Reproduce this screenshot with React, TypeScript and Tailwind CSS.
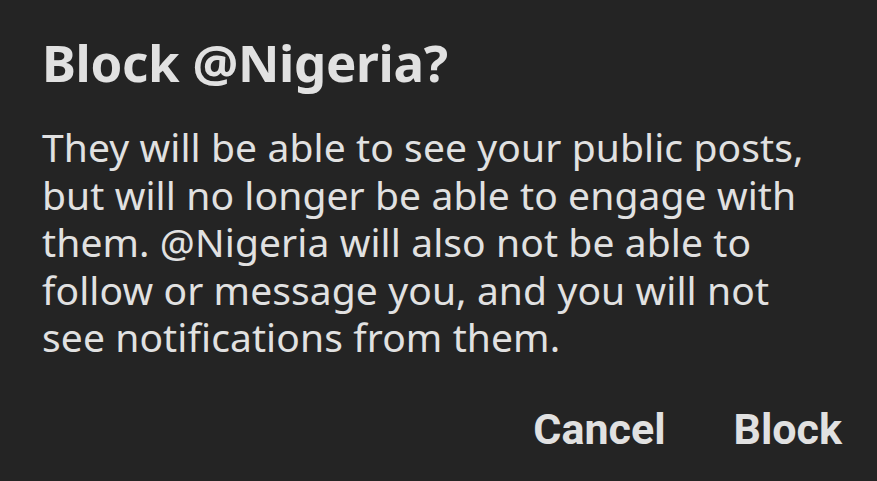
export default function App() {
  const lines = [
    'They will be able to see your public posts,',
    'but will no longer be able to engage with',
    'them. @Nigeria will also not be able to',
    'follow or message you, and you will not',
    'see notifications from them.',
  ]

  return (
    <div className="w-[877px] h-[481px] bg-[#242424] text-[#e1e1e1] overflow-hidden">
      <div className="pl-[42px] pr-[35px] pt-[28px]">
        <h1 className="font-['Noto_Sans',sans-serif] font-bold text-[51px] leading-[68px] tracking-[-0.3px]">
          Block @Nigeria?
        </h1>
        <p className="mt-[27px] font-['Noto_Sans',sans-serif] text-[39px] leading-[47.5px] tracking-[0.1px]">
          {lines.map((l) => (
            <span key={l} className="block whitespace-nowrap">
              {l}
            </span>
          ))}
        </p>
        <div className="mt-[43px] flex justify-end gap-[68px]">
          <button className="font-['Roboto',sans-serif] font-bold text-[43px] leading-[50px] text-[#e1e1e1]">
            Cancel
          </button>
          <button className="font-['Roboto',sans-serif] font-bold text-[43px] leading-[50px] text-[#e1e1e1]">
            Block
          </button>
        </div>
      </div>
    </div>
  )
}
